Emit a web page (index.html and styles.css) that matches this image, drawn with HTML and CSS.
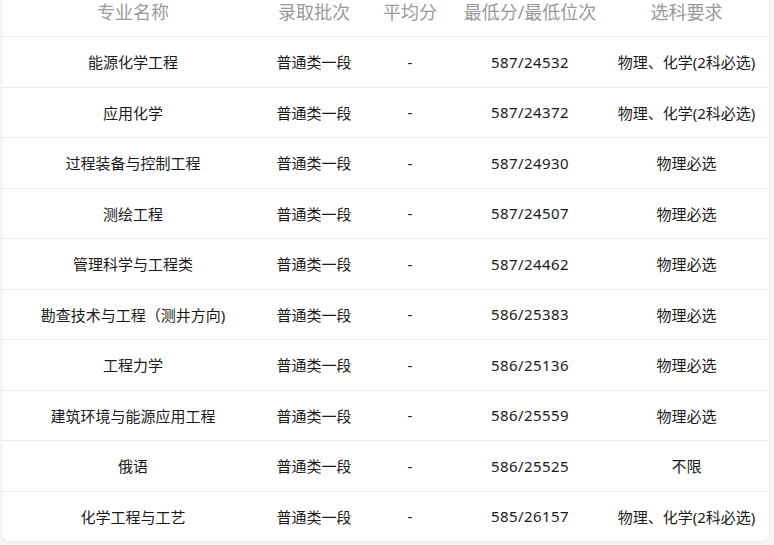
FILE: index.html
```html
<!DOCTYPE html>
<html lang="zh">
<head>
<meta charset="utf-8">
<link rel="stylesheet" href="styles.css">
</head>
<body>
<div class="wrap">
  <div class="card">
    <div class="row head">
      <div>专业名称</div><div>录取批次</div><div>平均分</div><div>最低分/最低位次</div><div>选科要求</div>
    </div>
    <div class="row"><div>能源化学工程</div><div>普通类一段</div><div>-</div><div class="num">587/24532</div><div>物理、化学(2科必选)</div></div>
    <div class="row"><div>应用化学</div><div>普通类一段</div><div>-</div><div class="num">587/24372</div><div>物理、化学(2科必选)</div></div>
    <div class="row"><div>过程装备与控制工程</div><div>普通类一段</div><div>-</div><div class="num">587/24930</div><div>物理必选</div></div>
    <div class="row"><div>测绘工程</div><div>普通类一段</div><div>-</div><div class="num">587/24507</div><div>物理必选</div></div>
    <div class="row"><div>管理科学与工程类</div><div>普通类一段</div><div>-</div><div class="num">587/24462</div><div>物理必选</div></div>
    <div class="row"><div>勘查技术与工程（测井方向)</div><div>普通类一段</div><div>-</div><div class="num">586/25383</div><div>物理必选</div></div>
    <div class="row"><div>工程力学</div><div>普通类一段</div><div>-</div><div class="num">586/25136</div><div>物理必选</div></div>
    <div class="row"><div>建筑环境与能源应用工程</div><div>普通类一段</div><div>-</div><div class="num">586/25559</div><div>物理必选</div></div>
    <div class="row"><div>俄语</div><div>普通类一段</div><div>-</div><div class="num">586/25525</div><div>不限</div></div>
    <div class="row"><div>化学工程与工艺</div><div>普通类一段</div><div>-</div><div class="num">585/26157</div><div>物理、化学(2科必选)</div></div>
  </div>
</div>
</body>
</html>
```
FILE: styles.css
```css
html, body {
  margin: 0;
  padding: 0;
  background: #f7f7f7;
  overflow: hidden;
}
.wrap {
  padding: 0 5px 4px 2px;
}
.card {
  margin-top: -14px;
  background: #fff;
  border-radius: 0 0 8px 8px;
  box-shadow: 0 1px 3px rgba(0,0,0,0.08);
  font-family: "Noto Sans", "Noto Sans CJK SC", sans-serif;
  font-size: 15px;
  color: #1a1a1a;
}
.row {
  display: grid;
  grid-template-columns: 262px 100px 92px 148px 1fr;
  height: 50.5px;
  box-sizing: border-box;
  border-top: 1px solid #ececec;
  align-items: center;
  text-align: center;
}
.num {
  letter-spacing: 0.4px;
}
.row.head {
  border-top: none;
  height: 50px;
  font-size: 18px;
  color: #9a9a9a;
}
```
